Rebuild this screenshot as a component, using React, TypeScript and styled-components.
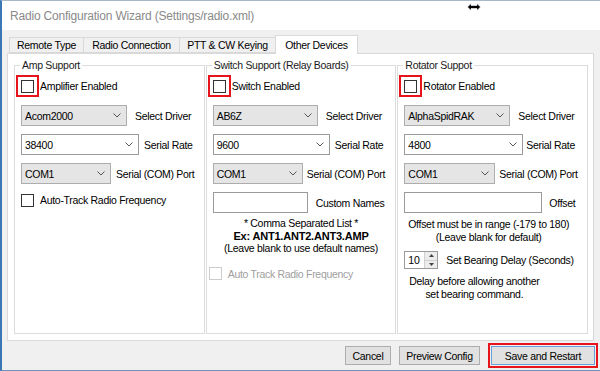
import styled, { createGlobalStyle } from "styled-components";

const GlobalStyle = createGlobalStyle`
  html, body { margin: 0; padding: 0; background: #ffffff; }
  body { font-family: "Liberation Sans", Arial, sans-serif; }
`;

const Window = styled.div`
  width: 600px;
  height: 371px;
  box-sizing: border-box;
  display: flex;
  flex-direction: column;
  background: #f0f0f0;
  border-top: 1px solid #a9b8c9;
  border-left: 2px solid #3a77b4;
  border-bottom: 1px solid #6f93b8;
  overflow: hidden;
`;

const TitleBar = styled.div`
  position: relative;
  height: 29px;
  flex: none;
  display: flex;
  align-items: center;
  padding-left: 8px;
  background: #ffffff;
  color: #8a8a8a;
  font-size: 12px;
  letter-spacing: -0.2px;
`;

const Cursor = styled.svg`
  position: absolute;
  left: 465px;
  top: 2px;
`;

const Body = styled.div`
  flex: 1;
  display: flex;
  flex-direction: column;
  padding: 5px 6px 0 5px;
`;

const TabStrip = styled.div`
  height: 18px;
  display: flex;
  align-items: flex-end;
  padding-left: 2px;
`;

const Tab = styled.div<{ $w: number; $active?: boolean }>`
  position: relative;
  z-index: ${(p) => (p.$active ? 2 : 1)};
  width: ${(p) => p.$w}px;
  height: ${(p) => (p.$active ? 19 : 16)}px;
  margin-bottom: ${(p) => (p.$active ? -1 : 0)}px;
  box-sizing: border-box;
  border: 1px solid #d9d9d9;
  border-bottom: ${(p) => (p.$active ? "none" : "1px solid #d9d9d9")};
  background: ${(p) => (p.$active ? "#ffffff" : "#f0f0f0")};
  display: flex;
  align-items: center;
  justify-content: center;
  padding-bottom: ${(p) => (p.$active ? 1 : 0)}px;
  font-size: 10.5px;
  letter-spacing: -0.3px;
  color: #000;
  white-space: nowrap;
  & + & {
    margin-left: -1px;
  }
`;

const TabPage = styled.div`
  height: 288px;
  flex: none;
  box-sizing: border-box;
  border: 1px solid #d9d9d9;
  background: #ffffff;
  display: flex;
  gap: 1px;
  padding: 5px 5px 6px 6px;
`;

const Group = styled.fieldset`
  flex: 1;
  min-width: 0;
  margin: 0;
  padding: 4px 6px 0 6px;
  border: 1px solid #dcdcdc;
  display: flex;
  flex-direction: column;
  gap: 8px;
`;

const Legend = styled.legend`
  font-size: 10.5px;
  line-height: 12px;
  letter-spacing: -0.3px;
  color: #1a1a1a;
  padding: 0 2px;
  margin-left: -1px;
`;

const Row = styled.div<{ $gap?: number; $mt?: number; $h?: number; $ml?: number }>`
  display: flex;
  align-items: center;
  height: ${(p) => p.$h ?? 21}px;
  gap: ${(p) => p.$gap ?? 8}px;
  margin-top: ${(p) => p.$mt ?? 0}px;
  margin-left: ${(p) => p.$ml ?? 0}px;
  font-size: 10.5px;
  letter-spacing: -0.3px;
  color: #000;
  white-space: nowrap;
`;

const RedBox = styled.div`
  width: 23px;
  height: 22px;
  box-sizing: border-box;
  border: 2px solid #e8141b;
  display: flex;
  align-items: center;
  justify-content: center;
`;

const Check = styled.div<{ $disabled?: boolean }>`
  width: 13px;
  height: 13px;
  box-sizing: border-box;
  flex: none;
  background: #ffffff;
  border: 1px solid ${(p) => (p.$disabled ? "#cccccc" : "#333333")};
`;

const Label = styled.span<{ $disabled?: boolean }>`
  color: ${(p) => (p.$disabled ? "#a0a0a0" : "#000")};
`;

const Field = styled.div<{ $w: number; $kind: "select" | "combo" | "text" }>`
  width: ${(p) => p.$w}px;
  height: 21px;
  flex: none;
  box-sizing: border-box;
  display: flex;
  align-items: center;
  justify-content: space-between;
  padding: 0 5px 0 3px;
  background: ${(p) => (p.$kind === "select" ? "#e5e5e5" : "#ffffff")};
  border: 1px solid ${(p) => (p.$kind === "select" ? "#adadad" : "#9a9a9a")};
  font-size: 10.5px;
  letter-spacing: -0.3px;
  color: #000;
`;

const Note = styled.div<{ $w?: number; $mt?: number; $pr?: number }>`
  width: ${(p) => (p.$w ? `${p.$w}px` : "auto")};
  margin-top: ${(p) => p.$mt ?? 0}px;
  padding-right: ${(p) => p.$pr ?? 0}px;
  text-align: center;
  font-size: 10.5px;
  line-height: 12.5px;
  letter-spacing: -0.3px;
  color: #000;
  white-space: nowrap;
`;

const Strong = styled.div`
  font-weight: bold;
  font-size: 11px;
  letter-spacing: -0.2px;
`;

const Spinner = styled.div`
  width: 34px;
  height: 18px;
  box-sizing: border-box;
  flex: none;
  display: flex;
  border: 1px solid #9a9a9a;
  background: #ffffff;
`;

const SpinValue = styled.div`
  flex: 1;
  padding-left: 3px;
  display: flex;
  align-items: center;
`;

const SpinButtons = styled.div`
  width: 12px;
  display: flex;
  flex-direction: column;
  border-left: 1px solid #d0d0d0;
  background: #ececec;
`;

const SpinHalf = styled.div`
  flex: 1;
  display: flex;
  align-items: center;
  justify-content: center;
  & + & {
    border-top: 1px solid #d0d0d0;
  }
`;

const Footer = styled.div`
  flex: 1;
  display: flex;
  align-items: center;
  justify-content: flex-end;
  gap: 8px;
  margin-right: -4px;
`;

const Button = styled.div<{ $w: number; $default?: boolean }>`
  width: ${(p) => p.$w}px;
  height: 19px;
  box-sizing: border-box;
  display: flex;
  align-items: center;
  justify-content: center;
  background: #e1e1e1;
  border: 1px solid ${(p) => (p.$default ? "#6aa0d8" : "#adadad")};
  font-size: 10.5px;
  letter-spacing: -0.3px;
  color: #000;
  white-space: nowrap;
`;

const RedFrame = styled.div`
  padding: 1px;
  border: 2px solid #e8141b;
  display: flex;
`;

function Chevron() {
  return (
    <svg width="8" height="5" viewBox="0 0 8 5">
      <polyline points="0.5,0.5 4,4 7.5,0.5" fill="none" stroke="#555" strokeWidth="1" />
    </svg>
  );
}

function Dropdown({ w, kind, value }: { w: number; kind: "select" | "combo"; value: string }) {
  return (
    <Field $w={w} $kind={kind}>
      <span>{value}</span>
      <Chevron />
    </Field>
  );
}

function Enabled({ label }: { label: string }) {
  return (
    <Row $h={22} $gap={1} $ml={-5}>
      <RedBox>
        <Check />
      </RedBox>
      <Label>{label}</Label>
    </Row>
  );
}

export default function App() {
  return (
    <>
      <GlobalStyle />
      <Window>
        <TitleBar>
          Radio Configuration Wizard (Settings/radio.xml)
          <Cursor width="14" height="8" viewBox="0 0 14 8">
            <path d="M0.5 4 L4 0.5 L4 2.5 L10 2.5 L10 0.5 L13.5 4 L10 7.5 L10 5.5 L4 5.5 L4 7.5 Z" fill="#000" stroke="#fff" strokeWidth="0.6" />
          </Cursor>
        </TitleBar>
        <Body>
          <TabStrip>
            <Tab $w={75}>Remote Type</Tab>
            <Tab $w={97}>Radio Connection</Tab>
            <Tab $w={97}>PTT &amp; CW Keying</Tab>
            <Tab $w={83} $active>
              Other Devices
            </Tab>
          </TabStrip>
          <TabPage>
            <Group>
              <Legend>Amp Support</Legend>
              <Enabled label="Amplifier Enabled" />
              <Row>
                <Dropdown w={106} kind="select" value="Acom2000" />
                Select Driver
              </Row>
              <Row $gap={5}>
                <Dropdown w={118} kind="combo" value="38400" />
                Serial Rate
              </Row>
              <Row $gap={5}>
                <Dropdown w={90} kind="select" value="COM1" />
                Serial (COM) Port
              </Row>
              <Row $h={16} $gap={6}>
                <Check />
                <Label>Auto-Track Radio Frequency</Label>
              </Row>
            </Group>

            <Group>
              <Legend>Switch Support (Relay Boards)</Legend>
              <Enabled label="Switch Enabled" />
              <Row>
                <Dropdown w={105} kind="select" value="AB6Z" />
                Select Driver
              </Row>
              <Row $gap={5}>
                <Dropdown w={117} kind="combo" value="9600" />
                Serial Rate
              </Row>
              <Row $gap={4}>
                <Dropdown w={90} kind="select" value="COM1" />
                Serial (COM) Port
              </Row>
              <Row>
                <Field $w={95} $kind="text" />
                Custom Names
              </Row>
              <Note $mt={-4}>
                * Comma Separated List *
                <Strong>Ex: ANT1.ANT2.ANT3.AMP</Strong>
                (Leave blank to use default names)
              </Note>
              <Row $h={16} $gap={6} $mt={3} $ml={-4}>
                <Check $disabled />
                <Label $disabled>Auto Track Radio Frequency</Label>
              </Row>
            </Group>

            <Group>
              <Legend>Rotator Suppot</Legend>
              <Enabled label="Rotator Enabled" />
              <Row>
                <Dropdown w={106} kind="select" value="AlphaSpidRAK" />
                Select Driver
              </Row>
              <Row $gap={3}>
                <Dropdown w={119} kind="combo" value="4800" />
                Serial Rate
              </Row>
              <Row $gap={4}>
                <Dropdown w={91} kind="select" value="COM1" />
                Serial (COM) Port
              </Row>
              <Row $gap={7}>
                <Field $w={138} $kind="text" />
                Offset
              </Row>
              <Note $mt={-3} $pr={8}>
                Offset must be in range (-179 to 180)
                <br />
                (Leave blank for default)
              </Note>
              <Row $h={18} $gap={8}>
                <Spinner>
                  <SpinValue>10</SpinValue>
                  <SpinButtons>
                    <SpinHalf>
                      <svg width="5" height="3" viewBox="0 0 5 3">
                        <polygon points="0,3 2.5,0 5,3" fill="#444" />
                      </svg>
                    </SpinHalf>
                    <SpinHalf>
                      <svg width="5" height="3" viewBox="0 0 5 3">
                        <polygon points="0,0 2.5,3 5,0" fill="#444" />
                      </svg>
                    </SpinHalf>
                  </SpinButtons>
                </Spinner>
                Set Bearing Delay (Seconds)
              </Row>
              <Note $w={140} $mt={-2}>
                Delay before allowing another
                <br />
                set bearing command.
              </Note>
            </Group>
          </TabPage>
          <Footer>
            <Button $w={46}>Cancel</Button>
            <Button $w={81}>Preview Config</Button>
            <RedFrame>
              <Button $w={104} $default>
                Save and Restart
              </Button>
            </RedFrame>
          </Footer>
        </Body>
      </Window>
    </>
  );
}
